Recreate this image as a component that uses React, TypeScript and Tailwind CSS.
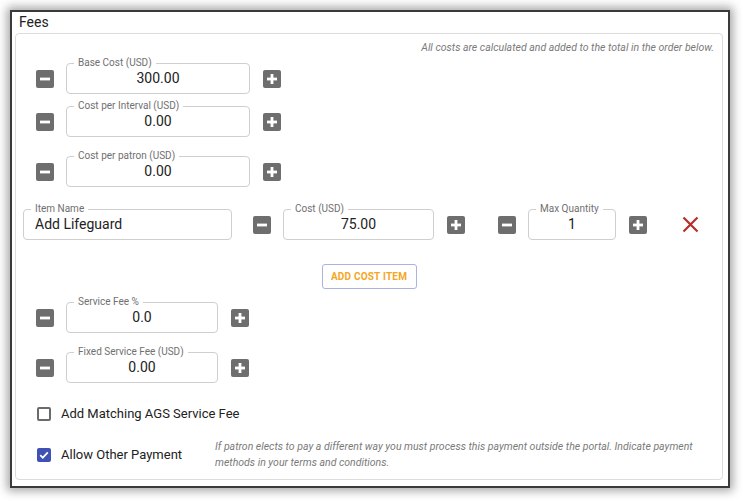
import { useState } from "react";

function Step({ kind }: { kind: "minus" | "plus" }) {
  return (
    <button className="w-[18px] h-[18px] bg-[#6e6e6e] rounded-[2px] flex items-center justify-center shrink-0">
      <svg width="12" height="12" viewBox="0 0 12 12">
        <rect x="1" y="4.6" width="10" height="2.8" fill="#fff" />
        {kind === "plus" && <rect x="4.6" y="1" width="2.8" height="10" fill="#fff" />}
      </svg>
    </button>
  );
}

function Field({
  label,
  value,
  width,
  left,
}: {
  label: string;
  value: string;
  width: string;
  left?: boolean;
}) {
  return (
    <div className={`relative h-[31px] border border-[#cfcfcf] rounded-[4px] flex items-center shrink-0 ${width}`}>
      <span className="absolute -top-[7px] left-[7px] px-[4px] bg-white text-[10px] leading-[12px] text-[#707070]">
        {label}
      </span>
      <span
        className={`w-full text-[14px] text-[#222] ${left ? "text-left pl-[11px]" : "text-center"}`}
      >
        {value}
      </span>
    </div>
  );
}

function StepRow({ label, value, width, mt }: { label: string; value: string; width: string; mt: string }) {
  return (
    <div className={`flex items-center pl-[20px] ${mt}`}>
      <Step kind="minus" />
      <div className="ml-[12px]">
        <Field label={label} value={value} width={width} />
      </div>
      <div className="ml-[13px]">
        <Step kind="plus" />
      </div>
    </div>
  );
}

function Check({ on }: { on: boolean }) {
  return (
    <span
      className={`w-[14px] h-[14px] rounded-[2px] flex items-center justify-center ${
        on ? "bg-[#3f51b5]" : "border-2 border-[#6b6b6b]"
      }`}
    >
      {on && (
        <svg width="12" height="12" viewBox="0 0 12 12">
          <path d="M2.2 6.2 L4.8 8.7 L9.8 3.4" stroke="#fff" strokeWidth="1.7" fill="none" />
        </svg>
      )}
    </span>
  );
}

export default function App() {
  const [matching, setMatching] = useState(false);
  const [other, setOther] = useState(true);

  return (
    <div className="w-[743px] h-[501px] bg-white pl-[10px] pt-[10px]" style={{ fontFamily: "Roboto, sans-serif" }}>
      <div className="w-[720px] h-[478px] border-2 border-[#3a3a3a] bg-white shadow-[0_0_9px_3px_rgba(0,0,0,0.35)] flex flex-col">
        <div className="h-[21px] pl-[7px] text-[14px] leading-[20px] text-[#222]">Fees</div>
        <div className="ml-[3px] w-[708px] h-[447px] border border-[#dcdcdc] rounded-[4px] pt-[7px] flex flex-col">
          <p className="text-right pr-[8px] text-[10.5px] leading-[14px] italic text-[#7a7a7a]">
            All costs are calculated and added to the total in the order below.
          </p>

          <StepRow label="Base Cost (USD)" value="300.00" width="w-[184px]" mt="mt-[8px]" />
          <StepRow label="Cost per Interval (USD)" value="0.00" width="w-[184px]" mt="mt-[12px]" />
          <StepRow label="Cost per patron (USD)" value="0.00" width="w-[184px]" mt="mt-[19px]" />

          <div className="flex items-center pl-[7px] mt-[22px]">
            <Field label="Item Name" value="Add Lifeguard" width="w-[209px]" left />
            <div className="ml-[21px]">
              <Step kind="minus" />
            </div>
            <div className="ml-[12px]">
              <Field label="Cost (USD)" value="75.00" width="w-[151px]" />
            </div>
            <div className="ml-[13px]">
              <Step kind="plus" />
            </div>
            <div className="ml-[33px]">
              <Step kind="minus" />
            </div>
            <div className="ml-[12px]">
              <Field label="Max Quantity" value="1" width="w-[88px]" />
            </div>
            <div className="ml-[13px]">
              <Step kind="plus" />
            </div>
            <button className="ml-[34px] w-[18px] h-[18px] flex items-center justify-center">
              <svg width="17" height="17" viewBox="0 0 17 17">
                <path d="M1.5 1.5 L15.5 15.5 M15.5 1.5 L1.5 15.5" stroke="#b3312b" strokeWidth="2.2" />
              </svg>
            </button>
          </div>

          <div className="flex justify-center mt-[24px]">
            <button className="w-[95px] h-[25px] border border-[#aab2e3] rounded-[3px] text-[10px] font-bold tracking-[0.2px] text-[#f5a623]">
              ADD COST ITEM
            </button>
          </div>

          <StepRow label="Service Fee %" value="0.0" width="w-[152px]" mt="mt-[13px]" />
          <StepRow label="Fixed Service Fee (USD)" value="0.00" width="w-[152px]" mt="mt-[19px]" />

          <label className="flex items-center pl-[21px] mt-[21px] h-[20px] cursor-pointer" onClick={() => setMatching(!matching)}>
            <Check on={matching} />
            <span className="ml-[10px] text-[13px] text-[#222]">Add Matching AGS Service Fee</span>
          </label>

          <div className="flex items-center mt-[15px]">
            <label className="flex items-center pl-[21px] w-[199px] shrink-0 cursor-pointer" onClick={() => setOther(!other)}>
              <Check on={other} />
              <span className="ml-[10px] text-[13px] text-[#222]">Allow Other Payment</span>
            </label>
            <p className="w-[490px] text-[10.5px] leading-[16px] italic text-[#7a7a7a]">
              If patron elects to pay a different way you must process this payment outside the portal. Indicate payment
              methods in your terms and conditions.
            </p>
          </div>
        </div>
      </div>
    </div>
  );
}
